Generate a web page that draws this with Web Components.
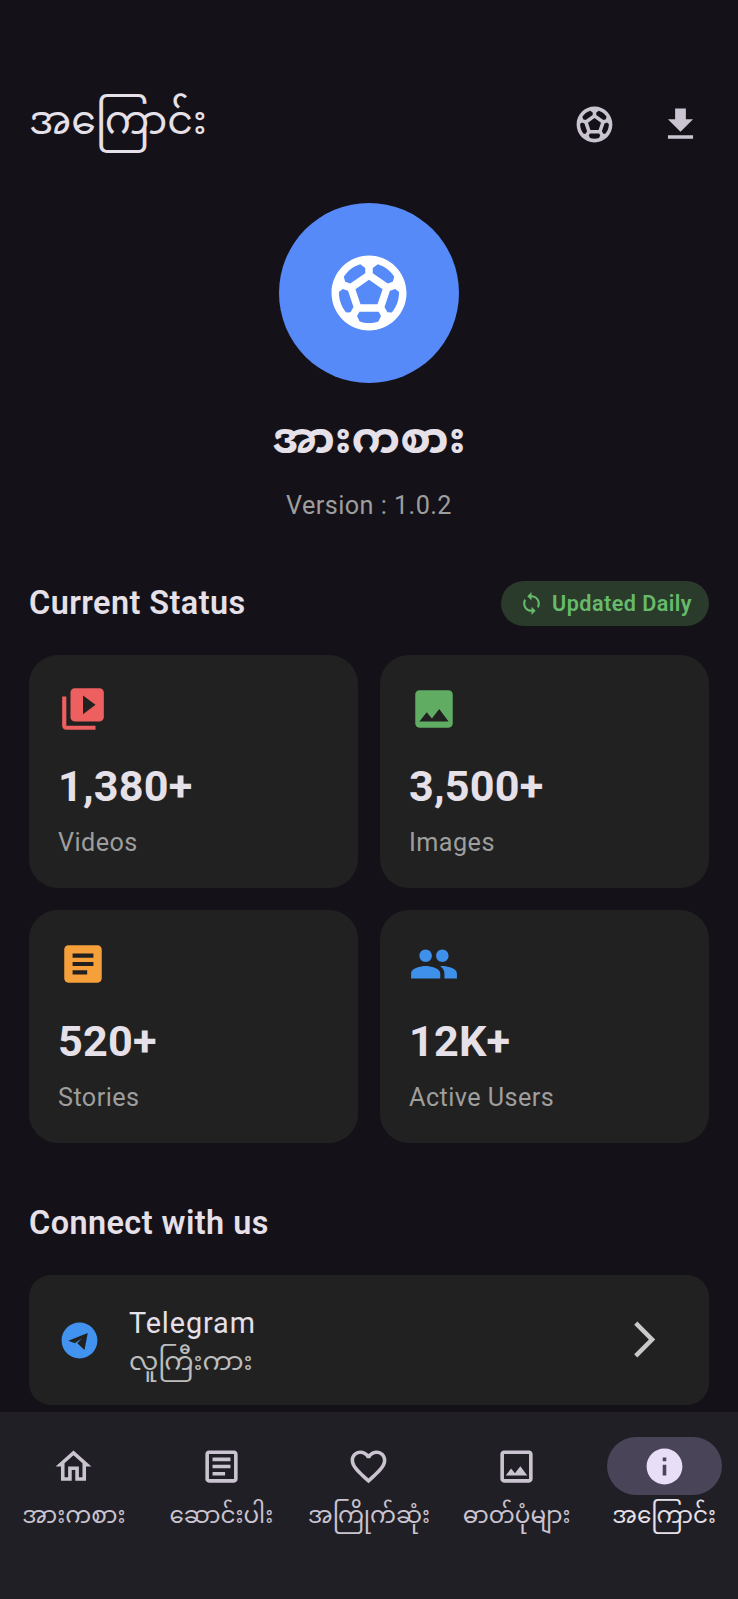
<!DOCTYPE html>
<html lang="my">
<head>
<meta charset="utf-8">
<title>About</title>
<style>
  html, body { margin: 0; padding: 0; background: #141218; }
  body { font-family: Roboto, "Noto Sans Myanmar", "Noto Sans", sans-serif; color: #e6e0e9; }
</style>
</head>
<body>
<about-page></about-page>

<script>
const ICONS = {
  soccer: 'M12 2C6.48 2 2 6.48 2 12s4.48 10 10 10 10-4.48 10-10S17.52 2 12 2zm1 3.3l1.35-.95c1.82.56 3.37 1.76 4.38 3.34l-.39 1.34-1.35.46L13 6.7V5.3zm-3.35-.95L11 5.3v1.4L7.01 9.49l-1.35-.46-.39-1.34c1.01-1.57 2.56-2.77 4.38-3.34zM7.08 17.11l-1.14.1C4.73 15.81 4 13.99 4 12c0-.12.01-.23.02-.35l1-.73 1.38.48 1.46 4.34-.78 1.37zm7.42 2.48c-.79.26-1.63.41-2.5.41s-1.71-.15-2.5-.41l-.69-1.49.64-1.1h5.11l.64 1.11-.7 1.48zM14.27 15H9.73l-1.35-4.02L12 8.44l3.63 2.54L14.27 15zm3.79 2.21l-1.14-.1-.79-1.37 1.46-4.34 1.39-.47 1 .73c.01.11.02.22.02.34 0 1.99-.73 3.81-1.94 5.21z',
  download: 'M19 9h-4V3H9v6H5l7 7 7-7zM5 18v2h14v-2H5z',
  sync: 'M12 4V1L8 5l4 4V6c3.31 0 6 2.69 6 6 0 1.01-.25 1.97-.7 2.8l1.46 1.46C19.54 15.03 20 13.57 20 12c0-4.42-3.58-8-8-8zm0 14c-3.31 0-6-2.69-6-6 0-1.01.25-1.97.7-2.8L5.24 7.74C4.46 8.97 4 10.43 4 12c0 4.42 3.58 8 8 8v3l4-4-4-4v3z',
  video: 'M4 6H2v14c0 1.1.9 2 2 2h14v-2H4V6zm16-4H8c-1.1 0-2 .9-2 2v12c0 1.1.9 2 2 2h12c1.1 0 2-.9 2-2V4c0-1.1-.9-2-2-2zm-8 12.5v-9l6 4.5-6 4.5z',
  image: 'M21 19V5c0-1.1-.9-2-2-2H5c-1.1 0-2 .9-2 2v14c0 1.1.9 2 2 2h14c1.1 0 2-.9 2-2zM8.5 13.5l2.5 3.01L14.5 12l4.5 6H5l3.5-4.5z',
  article: 'M19 3H5c-1.1 0-2 .9-2 2v14c0 1.1.9 2 2 2h14c1.1 0 2-.9 2-2V5c0-1.1-.9-2-2-2zm-5 14H7v-2h7v2zm3-4H7v-2h10v2zm0-4H7V7h10v2z',
  people: 'M16 11c1.66 0 2.99-1.34 2.99-3S17.66 5 16 5c-1.66 0-3 1.34-3 3s1.34 3 3 3zm-8 0c1.66 0 2.99-1.34 2.99-3S9.66 5 8 5C6.34 5 5 6.34 5 8s1.34 3 3 3zm0 2c-2.33 0-7 1.17-7 3.5V19h14v-2.5c0-2.33-4.67-3.5-7-3.5zm8 0c-.29 0-.62.02-.97.05 1.16.84 1.97 1.97 1.97 3.45V19h6v-2.5c0-2.33-4.67-3.5-7-3.5z',
  // plane is a hole in the disc, so the card shows through it
  telegram: 'M12 2C6.48 2 2 6.48 2 12s4.48 10 10 10 10-4.48 10-10S17.52 2 12 2zM16.6 7.8 5.7 12.1 9.4 13.6 13.2 10.9 10.8 13.5 14.8 17.3z',
  home: 'M12 5.69l5 4.5V18h-2v-6H9v6H7v-7.81l5-4.5M12 3L2 12h3v8h6v-6h2v6h6v-8h3L12 3z',
  articleOutline: 'M19 5v14H5V5h14m0-2H5c-1.1 0-2 .9-2 2v14c0 1.1.9 2 2 2h14c1.1 0 2-.9 2-2V5c0-1.1-.9-2-2-2zM14 17H7v-2h7v2zm3-4H7v-2h10v2zm0-4H7V7h10v2z',
  heart: 'M16.5 3c-1.74 0-3.41.81-4.5 2.09C10.91 3.81 9.24 3 7.5 3 4.42 3 2 5.42 2 8.5c0 3.78 3.4 6.86 8.55 11.54L12 21.35l1.45-1.32C18.6 15.36 22 12.28 22 8.5 22 5.42 19.58 3 16.5 3zm-4.4 15.55l-.1.1-.1-.1C7.14 14.24 4 11.39 4 8.5 4 6.5 5.5 5 7.5 5c1.54 0 3.04.99 3.57 2.36h1.87C13.46 5.99 14.96 5 16.5 5c2 0 3.5 1.5 3.5 3.5 0 2.89-3.14 5.74-7.9 10.05z',
  imageOutline: 'M19 5v14H5V5h14m0-2H5c-1.1 0-2 .9-2 2v14c0 1.1.9 2 2 2h14c1.1 0 2-.9 2-2V5c0-1.1-.9-2-2-2zm-4.86 8.86l-3 3.87L9 13.14 6 17h12l-3.86-5.14z',
  info: 'M12 2C6.48 2 2 6.48 2 12s4.48 10 10 10 10-4.48 10-10S17.52 2 12 2zm1 15h-2v-6h2v6zm0-8h-2V7h2v2z',
  chevron: 'M6.23 20.23L8 22l10-10L8 2 6.23 3.77 14.46 12z'
};

// small svg wrapper so every other element can just say <m-icon name="x">
class MIcon extends HTMLElement {
  connectedCallback() {
    const name = this.getAttribute('name');
    const size = this.getAttribute('size') || 43;
    const root = this.attachShadow({ mode: 'open' });
    root.innerHTML = `
      <style>
        :host { display: block; width: ${size}px; height: ${size}px; flex: none; }
        svg { display: block; width: 100%; height: 100%; fill: currentColor; fill-rule: evenodd; }
      </style>
      <svg viewBox="0 0 24 24"><path d="${ICONS[name]}"/></svg>
    `;
  }
}

class AppHeader extends HTMLElement {
  constructor() {
    super();
    this.attachShadow({ mode: 'open' }).innerHTML = `
      <style>
        :host { display: flex; align-items: center; height: 100px; padding: 74px 36px 0 29px; color: #e6e0e9; }
        h1 { flex: 1; margin: 0; padding-top: 2px; font: 400 39.6px "Noto Sans Myanmar", Roboto, sans-serif; }
        .actions { display: flex; gap: 43px; color: #cac4d0; }
      </style>
      <h1><slot></slot></h1>
      <div class="actions">
        <m-icon name="soccer"></m-icon>
        <m-icon name="download"></m-icon>
      </div>
    `;
  }
}

class AppHero extends HTMLElement {
  constructor() {
    super();
    this.attachShadow({ mode: 'open' }).innerHTML = `
      <style>
        :host { display: flex; flex-direction: column; align-items: center; padding-top: 29px; }
        .logo { width: 180px; height: 180px; border-radius: 50%; background: #568af9; color: #fff; display: flex; align-items: center; justify-content: center; }
        h2 { margin: 28px 0 0; font: 700 43.8px/64px "Noto Sans Myanmar", Roboto, sans-serif; color: #e6e0e9; }
        p { margin: 13px 0 0; font-size: 25.2px; line-height: 36px; letter-spacing: .45px; color: #9e9e9e; }
      </style>
      <div class="logo"><m-icon name="soccer" size="90"></m-icon></div>
      <h2><slot name="name"></slot></h2>
      <p><slot name="version"></slot></p>
    `;
  }
}

class StatusChip extends HTMLElement {
  constructor() {
    super();
    this.attachShadow({ mode: 'open' }).innerHTML = `
      <style>
        :host { display: flex; align-items: center; gap: 8px; height: 45px; padding: 0 17px 0 18px; border-radius: 23px; background: #2a3a2b; color: #66bb6a; font-size: 21.6px; font-weight: 600; letter-spacing: .45px; }
      </style>
      <m-icon name="sync" size="25"></m-icon>
      <slot></slot>
    `;
  }
}

class SectionTitle extends HTMLElement {
  constructor() {
    super();
    this.attachShadow({ mode: 'open' }).innerHTML = `
      <style>
        :host { display: flex; align-items: center; justify-content: space-between; padding: 0 29px; }
        h3 { margin: 0; font-size: 32.4px; line-height: 45px; letter-spacing: .45px; font-weight: 600; color: #e6e0e9; }
      </style>
      <h3><slot></slot></h3>
      <slot name="aside"></slot>
    `;
  }
}

class StatCard extends HTMLElement {
  constructor() {
    super();
    const icon = this.getAttribute('icon');
    const color = this.getAttribute('color');
    this.attachShadow({ mode: 'open' }).innerHTML = `
      <style>
        :host { display: block; box-sizing: border-box; height: 233px; padding: 29px; border-radius: 29px; background: #212121; }
        m-icon { color: ${color}; }
        .value { margin-top: 23px; font-size: 43.2px; line-height: 60px; letter-spacing: .2px; font-weight: 700; color: #e6e0e9; }
        .label { margin-top: 8px; font-size: 25.2px; line-height: 36px; letter-spacing: .45px; color: #9e9e9e; }
      </style>
      <m-icon name="${icon}" size="50"></m-icon>
      <div class="value">${this.getAttribute('value')}</div>
      <div class="label">${this.getAttribute('label')}</div>
    `;
  }
}

class LinkCard extends HTMLElement {
  constructor() {
    super();
    this.attachShadow({ mode: 'open' }).innerHTML = `
      <style>
        :host { display: flex; align-items: center; box-sizing: border-box; height: 130px; margin: 0 29px; padding: 0 43px 0 29px; border-radius: 22px; background: #212121; }
        .tg { color: #4293ef; }
        .text { flex: 1; margin-left: 28px; padding-top: 6px; display: flex; flex-direction: column; gap: 3px; }
        .title { font-size: 28.8px; line-height: 38px; letter-spacing: .9px; color: #e6e0e9; }
        .sub { font: 400 26px/38px "Noto Sans Myanmar", Roboto, sans-serif; color: #bdbdbd; }
        .go { color: #c9c9c9; margin-bottom: 2px; }
      </style>
      <m-icon class="tg" name="telegram"></m-icon>
      <div class="text">
        <span class="title"><slot name="title"></slot></span>
        <span class="sub"><slot name="sub"></slot></span>
      </div>
      <m-icon class="go" name="chevron"></m-icon>
    `;
  }
}

class NavItem extends HTMLElement {
  constructor() {
    super();
    this.attachShadow({ mode: 'open' }).innerHTML = `
      <style>
        :host { flex: 1 1 0; min-width: 0; display: flex; flex-direction: column; align-items: center; color: #cac4d0; }
        .pill { width: 115px; height: 58px; border-radius: 29px; display: flex; align-items: center; justify-content: center; }
        :host([active]) .pill { background: #4a4458; color: #e8def8; }
        :host([active]) .label { color: #e6e0e9; }
        .label { margin-top: 5px; white-space: nowrap; font: 400 23.1px/36px "Noto Sans Myanmar", Roboto, sans-serif; }
      </style>
      <div class="pill"><m-icon name="${this.getAttribute('icon')}"></m-icon></div>
      <div class="label"><slot></slot></div>
    `;
  }
}

class BottomNav extends HTMLElement {
  constructor() {
    super();
    this.attachShadow({ mode: 'open' }).innerHTML = `
      <style>
        :host { display: flex; flex: none; box-sizing: border-box; height: 187px; padding-top: 25px; background: #211f26; }
      </style>
      <slot></slot>
    `;
  }
}

class AboutPage extends HTMLElement {
  constructor() {
    super();
    this.attachShadow({ mode: 'open' }).innerHTML = `
      <style>
        :host { display: flex; flex-direction: column; width: 738px; height: 1599px; overflow: hidden; background: #141218; }
        .scroll { flex: 1; min-height: 0; overflow: hidden; }
        .status { margin-top: 57px; }
        .grid { display: grid; grid-template-columns: 1fr 1fr; gap: 22px; padding: 0 29px; margin-top: 29px; }
        .connect { margin-top: 58px; margin-bottom: 29px; }
      </style>
      <div class="scroll">
        <app-header>အကြောင်း</app-header>
        <app-hero>
          <span slot="name">အားကစား</span>
          <span slot="version">Version : 1.0.2</span>
        </app-hero>
        <section-title class="status">
          Current Status
          <status-chip slot="aside">Updated Daily</status-chip>
        </section-title>
        <div class="grid">
          <stat-card icon="video" color="#ee5f5f" value="1,380+" label="Videos"></stat-card>
          <stat-card icon="image" color="#5fac62" value="3,500+" label="Images"></stat-card>
          <stat-card icon="article" color="#f5a03a" value="520+" label="Stories"></stat-card>
          <stat-card icon="people" color="#3f90ea" value="12K+" label="Active Users"></stat-card>
        </div>
        <section-title class="connect">Connect with us</section-title>
        <link-card>
          <span slot="title">Telegram</span>
          <span slot="sub">လူကြီးကား</span>
        </link-card>
      </div>
      <bottom-nav>
        <nav-item icon="home">အားကစား</nav-item>
        <nav-item icon="articleOutline">ဆောင်းပါး</nav-item>
        <nav-item icon="heart">အကြိုက်ဆုံး</nav-item>
        <nav-item icon="imageOutline">ဓာတ်ပုံများ</nav-item>
        <nav-item icon="info" active>အကြောင်း</nav-item>
      </bottom-nav>
    `;
  }
}

customElements.define('m-icon', MIcon);
customElements.define('app-header', AppHeader);
customElements.define('app-hero', AppHero);
customElements.define('status-chip', StatusChip);
customElements.define('section-title', SectionTitle);
customElements.define('stat-card', StatCard);
customElements.define('link-card', LinkCard);
customElements.define('nav-item', NavItem);
customElements.define('bottom-nav', BottomNav);
customElements.define('about-page', AboutPage);
</script>
</body>
</html>
